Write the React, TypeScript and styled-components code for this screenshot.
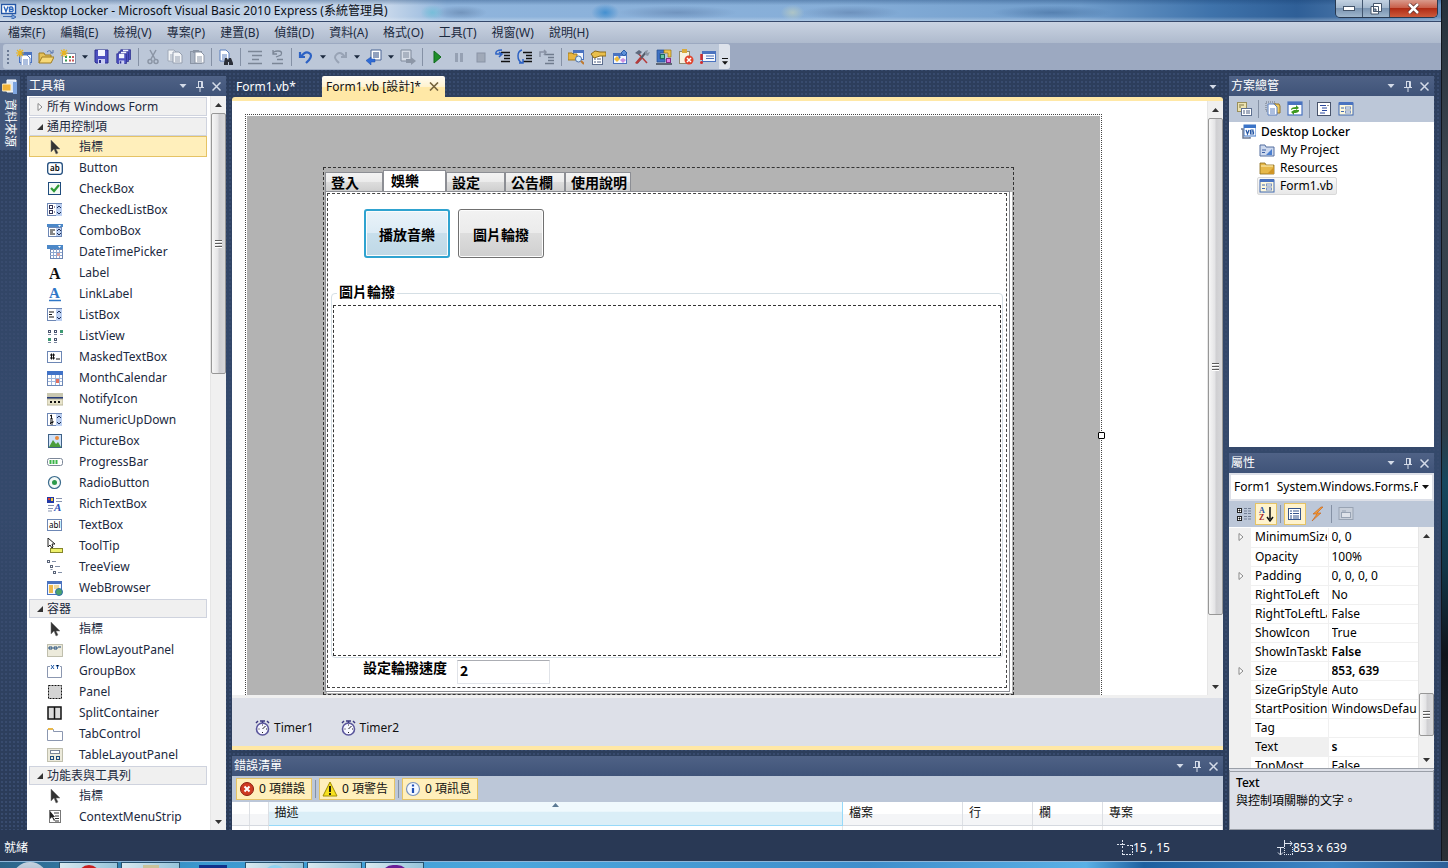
import React from 'react';
import styled, { createGlobalStyle, css } from 'styled-components';

const ui = `"Noto Sans", "Noto Sans CJK TC", sans-serif`;

const GlobalStyle = createGlobalStyle`
  *, *::before, *::after { box-sizing: border-box; }
  body { margin: 0; font: 12px/16px ${ui}; color: #1b293e; background: #2a3038; overflow: hidden; }
  button, input, select { font: inherit; color: inherit; margin: 0; padding: 0; border: 0; background: none; }
  ul { list-style: none; margin: 0; padding: 0; }
  a { color: inherit; text-decoration: none; }
  svg { display: block; flex: none; }
`;

/* ---------- icons ---------- */

const N = '#1f4b7c';
const B = '#6d87b5';

const Win = ({ x = 1, y = 2, w = 14, h = 12 }: { x?: number; y?: number; w?: number; h?: number }) => (
  <>
    <rect x={x} y={y} width={w} height={h} fill="#4a73c0" />
    <rect x={x + 1} y={y + 3} width={w - 2} height={h - 4} fill="#f4f7fd" />
  </>
);
const Spinner = () => (
  <>
    <rect x="9" y="2" width="6" height="12" fill="#bcd0f2" />
    <path d="M10 6l2-2 2 2M10 10l2 2 2-2" fill="none" stroke="#1d2f57" />
  </>
);
const ListFrame = () => <rect x=".5" y="1.5" width="14" height="12" fill="#fff" stroke={B} />;
const Page = ({ x = 4, y = 2, c = '#5b7fbe' }: { x?: number; y?: number; c?: string }) => (
  <>
    <path d={`M${x} ${y}h6l3 3v8h-9z`} fill="#fff" stroke={c} />
    <path d={`M${x + 2} ${y + 5}h5M${x + 2} ${y + 7}h5M${x + 2} ${y + 9}h5`} stroke={c} />
  </>
);
const Star = () => <path d="M4 0v8M0 4h8M1 1l6 6M7 1L1 7" stroke="#e9b520" strokeWidth="1.2" />;
const Disk = ({ x = 1, y = 1 }: { x?: number; y?: number }) => (
  <>
    <path d={`M${x} ${y}h13v13h-12l-1-1z`} fill="#4c4fc0" stroke="#2c2f8e" />
    <rect x={x + 3} y={y} width="7" height="6" fill="#f2f4ff" />
    <rect x={x + 3} y={y + 9} width="7" height="5" fill="#c9cdf0" />
    <rect x={x + 4} y={y + 10} width="2" height="3" fill="#2c2f8e" />
  </>
);
const Lines = ({ c = '#111' }: { c?: string }) => (
  <path d="M6 3.5h9M9 6.5h6M9 9.5h6M6 12.5h9" stroke={c} strokeWidth="1.6" />
);
const Folder = ({ c = '#e6b84a' }: { c?: string }) => (
  <>
    <path d="M1 3h5l1 2h8v9H1z" fill={c} stroke="#8a6a1a" strokeWidth=".8" />
    <path d="M2 6h12" stroke="#fff3c0" />
    <path d="M8 14l7-7v7z" fill="#cf9526" />
  </>
);

const icons: Record<string, React.ReactNode> = {
  vb: (<>
    <rect x=".5" y="1.5" width="14" height="9" fill="#fff" stroke="#2456a5" strokeWidth="1.4" />
    <path d="M3 3.500l2 5 2-5M8.500 4v4.500h3q1.500-1.200 0-2.200h-3M8.500 4h2.500q1.500 1 .5 2.300" fill="none" stroke="#2b66bd" strokeWidth="1.400" />
    <path d="M2 13.500h9v-2l4 2.500-4 2.500v-2" fill="#7ea5dc" stroke="#2456a5" strokeWidth=".8" />
  </>),
  newProject: (<><Win x={3} y={3} w={13} h={11} /><Page x={5} y={6} /><Star /></>),
  open: (<><path d="M1 14V4h5l1 2h6v3" fill="#e5c158" stroke="#a07d22" /><path d="M1 14l3-6h12l-3 6z" fill="#f7d978" stroke="#a07d22" /><path d="M9 3q3-3 5 1M15 1v3h-3" fill="none" stroke="#5675ad" /></>),
  addItem: (<><rect x="2.500" y="4.500" width="13" height="10" fill="#fff" stroke="#7f8ea8" /><path d="M5 8h2M9 8h2M5 11.500h2" stroke="#3a9a54" strokeWidth="2" /><path d="M12 8h2M9 11.500h2M12 11.500h2" stroke="#c95757" strokeWidth="2" /><Star /></>),
  save: <Disk />,
  saveAll: (<><g transform="translate(4 0) scale(.75)"><Disk /></g><g transform="translate(2 2) scale(.75)"><Disk /></g><g transform="translate(0 4) scale(.75)"><Disk /></g></>),
  cut: (<><path d="M5 1l5 9M11 1L6 10" stroke="#8b95a5" strokeWidth="1.500" /><circle cx="5" cy="12.500" r="2" fill="none" stroke="#8b95a5" strokeWidth="1.500" /><circle cx="11" cy="12.500" r="2" fill="none" stroke="#8b95a5" strokeWidth="1.500" /></>),
  copy: (<><g opacity=".8"><Page x={1} y={1} c="#98a2b2" /><Page x={6} y={3} c="#8b95a5" /></g></>),
  paste: (<><rect x="1.500" y="2.500" width="11" height="12" fill="#aab4c3" stroke="#8b95a5" /><rect x="4" y="1" width="6" height="3" fill="#8b95a5" /><g transform="translate(2 0)"><Page x={4} y={3} c="#8b95a5" /></g></>),
  find: (<><Page x={2} y={1} /><path d="M6 14l1-5h2l1 2 1-2h2l2 5v2h-4v-3h-1v3H6z" fill="#2b2f38" /></>),
  comment: <path d="M1 2.500h14M5 6.500h10M5 10.500h7M1 14.500h14" stroke="#7b8696" strokeWidth="1.300" />,
  uncomment: (<><path d="M4 5q0-3 5-3t3 4l-5 2M4 1v4h4" fill="none" stroke="#7b8696" strokeWidth="1.300" /><path d="M8 10.500h6M3 14.500h11" stroke="#7b8696" strokeWidth="1.300" /></>),
  undo: <path d="M2 3v5h5M3 8q4-6 8-4t0 7l-3 3" fill="none" stroke="#2d62c4" strokeWidth="2.200" />,
  redo: <path d="M14 3v5H9M13 8q-4-6-8-3t0 7l2 2" fill="none" stroke="#98a3b5" strokeWidth="2" />,
  navBack: (<><path d="M5 1h10v10H5z" fill="#fff" stroke="#4b6494" /><path d="M7 4h6M7 6h6M7 8h6" stroke="#23427c" /><path d="M9 10v3H5v3L0 11.500 5 8v2z" fill="#2f6bd6" stroke="#1f4ea8" strokeWidth=".5" /></>),
  navNext: (<><path d="M1 1h10v11H1z" fill="#d6dce6" stroke="#7f8a9c" /><path d="M3 4h6M3 6h6M3 8h6" stroke="#7f8a9c" /><path d="M6 10h5V8l5 4-5 4v-2H6z" fill="#8d97a7" /></>),
  play: <path d="M5 2l7 6-7 6z" fill="#1f8f2a" stroke="#0f6a1b" />,
  pause: <path d="M5.500 4v9M10.500 4v9" stroke="#96a1b3" strokeWidth="3" />,
  stop: <rect x="4" y="4" width="8" height="9" fill="#a0a9b8" stroke="#8994a6" />,
  stepInto: (<><Lines /><path d="M7 1Q0 1 1 5h5M4 3l3 2-3 3" fill="none" stroke="#2d62c4" strokeWidth="1.500" /></>),
  stepOver: (<><Lines /><path d="M5 1Q1 2 1 7t4 7M2 14h4v-4" fill="none" stroke="#2d62c4" strokeWidth="1.500" /></>),
  stepOut: (<><g transform="translate(0 2)"><Lines c="#6f7b8d" /></g><path d="M1 8V3h6M5 1l2 2-2 3" fill="none" stroke="#8993a5" strokeWidth="1.500" /></>),
  solution: (<><Win x={5} y={1} w={11} h={10} /><path d="M0 4h4l1 1h4v6H0z" fill="#e8b641" stroke="#a57c1c" /><circle cx="10.500" cy="10" r="3" fill="#d8efff" stroke="#4c6fa8" /><path d="M13 12l3 3" stroke="#c07a30" strokeWidth="2" /></>),
  properties: (<><rect x="2.500" y="6.500" width="10" height="9" fill="#fff" stroke="#5d6f8f" /><path d="M4 10h2M7 10h4M4 13h2M7 13h4" stroke="#4a5d80" /><path d="M1 5l4-3 5 1h6v4h-6l-6 2z" fill="#e9bf4c" stroke="#8b6a1c" /></>),
  toolboxWin: (<><Win x={1} y={4} w={14} h={11} /><path d="M2 10l3-3 3 3-3 3z" fill="#eebb3a" /><path d="M6 6l3 2-2 2z" fill="#3a6fd0" /><path d="M8 11l3-2 3 2-3 3z" fill="#c88fe0" /><path d="M12 1l3 3-3 3-3-3z" fill="#5c8fd8" stroke="#2c5fa8" /></>),
  tools: (<><path d="M3 3l10 11" stroke="#b53a3a" strokeWidth="1.500" /><path d="M12 3L3 14" stroke="#555e6c" strokeWidth="2" /><path d="M8 10l-2-2-5 6 2 1z" fill="#b53a3a" /><path d="M1 4l4-3 3 2-3 3z" fill="#5e6a7e" /><path d="M11 2l3-1-1 3 3-1-2 4-3-1z" fill="#8a94a4" /></>),
  extension: (<><path d="M1 1h7v3H4v6h5v3H1z" fill="#3e72c4" stroke="#244a8c" strokeWidth=".7" /><rect x="4.500" y="5.500" width="4" height="4" fill="#68c5a5" stroke="#1d6a5d" /><path d="M8 1h7v7h-3V4H8z" fill="#f0c44d" stroke="#997512" strokeWidth=".7" /><rect x="10.500" y="9.500" width="4" height="4" fill="#e67fe6" stroke="#852c85" /><rect x="0" y="14" width="16" height="2" fill="#5e6775" /></>),
  clipError: (<><rect x="1.500" y="2.500" width="10" height="12" fill="#f6f2e2" stroke="#8e8a70" /><rect x="4" y="0" width="5" height="4" fill="#d9aa3c" /><circle cx="11" cy="11" r="4.500" fill="#e0452f" /><path d="M9 9l4 4M13 9l-4 4" stroke="#fff" strokeWidth="1.500" /></>),
  errorList: (<><Win x={2} y={2} w={14} h={11} /><path d="M6 7h8M6 9.500h8" stroke="#4a6fb5" /><path d="M1.500 5v6" stroke="#d22b2b" strokeWidth="2.500" /><circle cx="1.500" cy="13.500" r="1.500" fill="#d22b2b" /></>),
  dataSource: (<><path d="M5 1h9v12H5z" fill="#dbe7f8" stroke="#fff" /><path d="M11 3h4v12h-4z" fill="#7ea5e0" /><rect x="0" y="5" width="9" height="7" rx="1" fill="#f2b43a" stroke="#fff3cf" /></>),
  pointer: <path d="M4 1v12l3-3 2 5 2-1-2-4h4z" fill="#333" stroke="#777" strokeWidth=".5" />,
  button: (<><rect x=".7" y="2.700" width="14.600" height="11.600" rx="2.500" fill="#fff" stroke={N} strokeWidth="1.300" /><text x="3" y="11" fontSize="8" fontFamily="Noto Sans" fontWeight="600" fill="#000">ab</text></>),
  checkbox: (<><rect x="1.500" y="1.500" width="12" height="12" fill="#f4faf7" stroke={N} /><path d="M4 7l3 3 5-6" fill="none" stroke="#2c9a35" strokeWidth="2.200" /></>),
  checkedList: (<><ListFrame /><rect x="2.500" y="3.500" width="3" height="3" fill="#fff" stroke="#335" /><rect x="2.500" y="8.500" width="3" height="3" fill="#fff" stroke="#335" /><path d="M7 5h1M7 10h1" stroke="#335" /><Spinner /></>),
  combo: (<><rect x="0" y="1" width="16" height="3" fill="#4c88c8" /><path d="M11 2h3l-1.500 2z" fill="#fff" /><rect x="1.500" y="4.500" width="13" height="9" fill="#fff" stroke={B} /><path d="M3 7h5M3 9h3M3 11h5" stroke="#111" /><rect x="9" y="5" width="5" height="8" fill="#bcd0f2" /><path d="M10 8l2-2 2 2M10 10l2 2 2-2" fill="none" stroke="#1d2f57" /></>),
  date: (<><rect x="0" y="1" width="16" height="4" fill="#4c88c8" /><path d="M11 2h3l-1.500 2z" fill="#fff" /><rect x="3.500" y="5.500" width="12" height="9" fill="#fff" stroke={B} /><path d="M3 8.500h12M3 11.500h12M6.500 5v9M9.500 5v9M12.500 5v9" stroke="#8fa8d0" /><rect x="10" y="9" width="3" height="3" fill="#d9a3a3" /></>),
  label: <text x="2" y="14" fontSize="16" fontFamily="Liberation Serif" fontWeight="700" fill="#111">A</text>,
  link: (<><text x="2" y="12" fontSize="15" fontFamily="Liberation Serif" fontWeight="700" fill="#2f78c8">A</text><path d="M2 14.500h12" stroke="#2f78c8" strokeWidth="1.500" /></>),
  list: (<><ListFrame /><path d="M2 5h5M2 7.500h3M2 10h5" stroke="#111" /><Spinner /></>),
  listView: (<><g fill="#fff" stroke="#4a5570"><rect x="1.500" y="2.500" width="2" height="2" /><rect x="7.500" y="2.500" width="2" height="2" /><rect x="7.500" y="10.500" width="2" height="2" /></g><rect x="13" y="2" width="3" height="3" fill="#3d9a72" /><rect x="1" y="10" width="3" height="3" fill="#3d9a72" /><path d="M1 6.500h3M7 6.500h3M13 6.500h3M1 14.500h3M7 14.500h3" stroke="#7b87a0" /></>),
  masked: (<><rect x=".5" y="2.500" width="14" height="11" fill="#fff" stroke={B} /><path d="M3 6h5M3 9h5M4.500 4.500v6M6.500 4.500v6M9 10h4" stroke="#111" /></>),
  month: (<><rect x=".5" y="1.500" width="15" height="14" fill="#fff" stroke={B} /><rect x="0" y="1" width="16" height="4" fill="#4173c8" /><path d="M1 8.500h14M1 11.500h14M4.500 5v10M8.500 5v10M12.500 5v10" stroke="#9fb6dc" /><rect x="9" y="9" width="3" height="4" fill="#e2705f" /></>),
  notify: (<><rect x="0" y="2" width="16" height="4" fill="#c9c7b0" /><rect x="0" y="6" width="16" height="2" fill="#263a78" /><rect x="0" y="8" width="16" height="6" fill="#e8e4cc" stroke="#b8b498" /><path d="M3 11h2M7 11h2M11 11h2" stroke="#111" strokeWidth="2" /></>),
  numeric: (<><ListFrame /><path d="M4.500 3v4M3 4l1.500-1M3 7h3M3 9h3v1.500H3.500V12H6" fill="none" stroke="#111" /><Spinner /></>),
  picture: (<><rect x="1.500" y="1.500" width="13" height="13" fill="#cfe2fa" stroke="#3f6186" /><path d="M2 14l4-7 3 4 2-2 3 5z" fill="#4b9d3d" /><circle cx="10" cy="5" r="2" fill="#e98a3c" /></>),
  progress: (<><rect x=".5" y="4.500" width="15" height="7" rx="2" fill="#fff" stroke="#7c8798" /><path d="M3.500 6v4M6.500 6v4M9.500 6v4" stroke="#3cb54a" strokeWidth="2" /></>),
  radio: (<><circle cx="7.500" cy="7.500" r="6" fill="#f4faf7" stroke="#3a6a8c" strokeWidth="1.200" /><circle cx="7.500" cy="7.500" r="2.500" fill="#2c9a4a" /></>),
  rich: (<><rect x="0" y="1" width="7" height="6" fill="#2339a5" /><path d="M1 2h2v2H1z" fill="#e3402f" /><path d="M4 2h2v3H4z" fill="#f6cb3a" /><path d="M9 2.500h6M9 5.500h6M1 9.500h6M1 12.500h5M1 15h4" stroke="#8693b0" /><text x="7" y="15" fontSize="11" fontStyle="italic" fontFamily="Liberation Serif" fontWeight="700" fill="#2b4fb5">A</text></>),
  text: (<><rect x=".5" y="2.500" width="14" height="11" fill="#fff" stroke={B} /><text x="2" y="11" fontSize="8" fontFamily="Noto Sans" fontWeight="400" fill="#000">abl</text></>),
  tooltip: (<><path d="M1 0v9l2-2 2 3 1-1-1-3h3z" fill="#fff" stroke="#222" /><rect x="3.500" y="10.500" width="12" height="4" fill="#eef06a" stroke="#85862a" /></>),
  tree: (<><g fill="#fff" stroke="#5a6478"><rect x="0.500" y="1.500" width="2" height="2" /><rect x="3.500" y="6.500" width="2" height="2" /><rect x="6.500" y="12.500" width="2" height="2" /></g><path d="M5 2.500h4M8 7.500h5M11 13.500h4M3.500 10.500h2" stroke="#8390a8" /></>),
  web: (<><Win x={0} y={1} w={15} h={14} /><rect x="2" y="5" width="4" height="8" fill="#efb94a" /><rect x="7" y="5" width="5" height="4" fill="#f0d99a" /><circle cx="12" cy="12" r="3.500" fill="#4ba36b" stroke="#2f6fae" /></>),
  flow: (<><rect x=".5" y="2.500" width="15" height="12" fill="#eceadb" stroke="#8b8a6c" strokeDasharray="1 1" /><path d="M2 5h3v2H2zM7 5h3v2H7zM11 5h3" fill="none" stroke={N} /></>),
  group: (<><path d="M3 3.500H.500v11h14v-11H13" fill="none" stroke="#8b97b0" /><path d="M4 2l3 4M7 2L4 6M9 2l1.500 2L12 2M10.500 4v2" stroke="#1f5aa8" /></>),
  panel: (<><rect x="1.500" y="1.500" width="13" height="13" fill="#d4d4d4" stroke="#111" strokeDasharray="2 1" /></>),
  split: (<><rect x="1" y="2" width="13" height="12" fill="#dcdcdc" stroke="#111" strokeWidth="1.500" /><path d="M7.500 2v12" stroke="#111" strokeWidth="1.500" /></>),
  tabs: (<><path d="M.500 3.500h6v2h9v9H.500z" fill="#fff" stroke="#8b97b0" /><path d="M1 3h5" stroke="#e9b84a" strokeWidth="2" /></>),
  tableLayout: (<><rect x=".5" y="1.500" width="15" height="13" fill="#eceadb" stroke="#8b8a6c" strokeDasharray="1 1" /><rect x="3.500" y="3.500" width="9" height="3" fill="#fff" stroke="#7b8696" /><rect x="3.500" y="9.500" width="3" height="3" fill="none" stroke={N} /><rect x="9.500" y="9.500" width="3" height="3" fill="none" stroke={N} /></>),
  context: (<><rect x="2.500" y="1.500" width="11" height="12" fill="#fff" stroke="#777" /><path d="M7 4h5M8 7h4M8 9.500h4M8 12h4" stroke="#333" /><path d="M3 2v8l2-2 2 4 1-1-2-3h2z" fill="#222" /></>),
  propPages: (<><rect x="1.500" y="1.500" width="9" height="9" fill="#ede3b0" stroke="#9a8f5a" /><path d="M3 4h5M3 6h2" stroke="#7d7445" /><rect x="5.500" y="7.500" width="10" height="7" fill="#fff" stroke="#5d6f8f" /><path d="M7 10h2M10 10h4M7 12h2M10 12h4" stroke="#4a5d80" /></>),
  showAll: (<><rect x="1" y="1" width="9" height="9" fill="none" stroke="#6b7280" strokeDasharray="1 1" /><path d="M8 3h6l1 2v7H8z" fill="#eec95e" stroke="#94752a" /><Page x={3} y={3} /></>),
  refresh: (<><rect x="1" y="1" width="14" height="13" fill="#fff" stroke="#4a73c0" strokeWidth="1.200" /><rect x="1" y="1" width="14" height="3" fill="#4a73c0" /><path d="M4 9V8q1-2 5-2V4l3 3-3 2V8H6M12 9v1q-1 2-5 2v2l-3-3 3-2" fill="#3f9a22" /></>),
  code: (<><rect x="1.500" y="1.500" width="13" height="13" fill="#fff" stroke="#47536b" /><path d="M4 4.500h6M6 7h5M6 9.500h5M4 12h5" stroke="#2b49a0" /><path d="M11 4.500h2" stroke="#999" /></>),
  designer: (<><rect x="1" y="2" width="14" height="12" fill="#fdf7dc" stroke="#3f68b0" /><rect x="1" y="1" width="14" height="3" fill="#4a73c0" /><path d="M3 7h3M3 10.500h3" stroke="#3f68b0" /><rect x="7.500" y="6" width="5" height="2" fill="#fff" stroke="#7b93c2" /><rect x="7.500" y="10" width="5" height="2" fill="#fff" stroke="#7b93c2" /></>),
  project: (<><rect x="4" y="1" width="12" height="11" fill="#fff" stroke="#3b74c8" /><rect x="4" y="1" width="12" height="3" fill="#3b74c8" /><path d="M6 6l1.500 4L9 6M10.500 6v4h3V8h-3M10.500 6h2.500v2" fill="none" stroke="#2456a5" strokeWidth="1.200" /><path d="M1 5h2v9h7v-1M3 5v7" fill="none" stroke="#6b7a94" strokeWidth="1.500" /></>),
  myProject: (<><path d="M1 3h5l1 2h8v9H1z" fill="#cdd9ee" stroke="#556f9f" /><path d="M3 8h4M3 10.500h3" stroke="#3b5fa5" /><path d="M7 13l6-6v6z" fill="#4a7fd0" /></>),
  folder: <Folder />,
  categorized: (<><rect x="1.500" y="2.500" width="4" height="4" fill="#fff" stroke="#222" /><rect x="1.500" y="10.500" width="4" height="4" fill="#fff" stroke="#222" /><path d="M2.500 4.500h2M3.500 3.500v2M2.500 12.500h2M3.500 11.500v2" stroke="#111" /><path d="M8 2.500h3M12 2.500h3M8 5h3M12 5h3M8 7.500h3M12 7.500h3M8 10.500h3M12 10.500h3M8 13h3M12 13h3" stroke="#727f95" /></>),
  sortAz: (<><text x="1" y="7" fontSize="8" fontWeight="700" fontFamily="Liberation Serif" fill="#2a4fa8">A</text><text x="1" y="14" fontSize="8" fontWeight="700" fontFamily="Liberation Serif" fill="#a52a2a">Z</text><path d="M12 1v12M9 11l3 4 3-4" fill="none" stroke="#111" strokeWidth="1.500" /></>),
  propList: (<><rect x="1.500" y="2.500" width="12" height="11" fill="#fff" stroke="#35548c" /><path d="M3 5h2M6 5h6M3 7.500h2M6 7.500h6M3 10h2M6 10h6M3 12h2M6 12h6" stroke="#35548c" /></>),
  bolt: <path d="M12 1L4 8h4l-5 7 9-8H8l6-6z" fill="#f29b38" stroke="#c4601a" strokeWidth=".6" />,
  propDisabled: (<><rect x="1" y="1.500" width="14" height="12" fill="#c8cfda" stroke="#98a3b3" /><rect x="3.500" y="6.500" width="9" height="5" fill="#dfe3ea" stroke="#98a3b3" /><path d="M4 5h4" stroke="#98a3b3" /></>),
  timer: (<><circle cx="7.500" cy="9" r="6" fill="#f7f7ff" stroke="#5a569c" strokeWidth="1.600" /><path d="M7.500 9l3-3M7.500 4.500v1M3.500 9h1M7.500 13v-1M11 9h1" stroke="#222" /><path d="M5 1h5M7.500 1v2M1 3l2-2M12 1l2 2" stroke="#3c3880" strokeWidth="1.500" /></>),
  error: (<><circle cx="8" cy="8" r="6.500" fill="#cf3a22" stroke="#8a1f10" /><path d="M5.500 5.500l5 5M10.500 5.500l-5 5" stroke="#fff" strokeWidth="2" /></>),
  warning: (<><path d="M8 1l7 14H1z" fill="#f7e11e" stroke="#a08c00" /><path d="M8 5v6M8 12v2" stroke="#111" strokeWidth="1.800" /></>),
  info: (<><circle cx="8" cy="8" r="6.500" fill="#f5f9ff" stroke="#7b94bd" strokeWidth="1.200" /><path d="M8 3.500v2M8 7v5" stroke="#1f4fb5" strokeWidth="2.200" /></>),
  location: (<path d="M0 4.500h9M5.500 0v9M6 14.500h10M15.500 5v10M10 5.500h5M5.500 10v5" fill="none" stroke="#dfe5f0" strokeDasharray="2 1" />),
  size: (<><path d="M8 3.500h7M7.500 0v7M13 1l2 2.500L13 6M3.500 7v8M1 12.500L3.500 15 6 12.500M0 7.500h7" fill="none" stroke="#dfe5f0" /><path d="M7 14.500h9M15.500 7v8M7.500 8v6" fill="none" stroke="#dfe5f0" strokeDasharray="1 1" /></>),
};

const Icon = ({ name, size = 16 }: { name: string; size?: number }) => (
  <svg width={size} height={size} viewBox="0 0 16 16" aria-hidden="true">{icons[name]}</svg>
);
const Down = ({ c = '#1b293e', w = 7 }: { c?: string; w?: number }) => (
  <svg width={w} height="4" viewBox="0 0 7 4" aria-hidden="true"><path d="M0 0h7L3.500 4z" fill={c} /></svg>
);

/* ---------- shell ---------- */

const Screen = styled.div`display: flex; flex-direction: column; height: 100vh; min-height: 480px;`;
const Desktop = styled.div`flex: 1; min-height: 0; display: flex;`;
const Wallpaper = styled.div`
  width: 7px; border-left: 1px solid #11161e;
  background: linear-gradient(#26313c 0, #3c4650 20%, #2e3c48 50%, #16485f 56%, #123648 66%, #10151c 76%, #2b3036 100%);
`;
const AppWindow = styled.main`
  flex: 1; min-width: 0; display: flex; flex-direction: column;
  background-color: #2c3d5b;
  background-image: radial-gradient(#384b6e 1px, transparent 1px), linear-gradient(#2b3b58, #34496b 45%, #34496b 60%, #293955);
  background-size: 4px 4px, 100% 100%;
`;
const TitleBar = styled.header`
  display: flex; align-items: center; gap: 4px; height: 22px; padding-left: 1px;
  border-bottom: 1px solid #35486b;
  background: linear-gradient(rgba(20, 60, 110, .35), transparent 25%, transparent 80%, rgba(255,255,255,.3)),
    radial-gradient(ellipse 12px 8px at 30% 60%, rgba(110, 190, 215, .8), transparent),
    radial-gradient(ellipse 26px 7px at 32% 60%, rgba(80, 110, 150, .45), transparent),
    radial-gradient(ellipse 14px 9px at 42% 60%, rgba(50, 135, 205, .8), transparent),
    radial-gradient(ellipse 60px 7px at 47% 60%, rgba(75, 105, 150, .4), transparent),
    radial-gradient(ellipse 12px 8px at 55% 60%, rgba(190, 205, 190, .7), transparent),
    radial-gradient(ellipse 50px 7px at 59% 60%, rgba(75, 105, 150, .4), transparent),
    radial-gradient(ellipse 60px 7px at 73% 60%, rgba(45, 85, 135, .4), transparent),
    linear-gradient(90deg, #b9cbe2 0, #c5d6ea 27%, #8fb4dc 31%, #86aed8 58%, #6f9ccb 75%, #3f73ab 84%, #2f5f97 90%, #6b93bf 100%);
`;
const Title = styled.h1`
  flex: 1; margin: 0; font: 12px/20px ${ui}; color: #0b0f16; white-space: nowrap;
`;
const WindowControls = styled.div`
  align-self: flex-start; display: flex; height: 18px; margin-right: 3px;
  border: 1px solid #27384f; border-top: 0; border-radius: 0 0 5px 5px; overflow: hidden;
`;
const WindowButton = styled.button<{ $danger?: boolean }>`
  display: grid; place-items: center; width: ${p => (p.$danger ? 47 : 27)}px;
  border-right: ${p => (p.$danger ? '0' : '1px solid #42566f')};
  background: ${p => (p.$danger
    ? 'linear-gradient(#d99a8c, #c9604b 45%, #b02c15 50%, #cc5a3c)'
    : 'linear-gradient(#c3d2e2, #a4b8cd 45%, #7b95b2 50%, #9fb6cc)')};
`;
const MenuBar = styled.nav`
  display: flex; align-items: center; height: 21px;
  background: linear-gradient(#cad3e2, #aebacd);
`;
const MenuItem = styled.button`padding: 0 7px 0 8px; line-height: 20px; white-space: nowrap;`;
const ToolStripArea = styled.div`height: 27px; padding: 1px 0 1px 3px; background: #9ca9c1; display: flex;`;
const ToolStrip = styled.div`
  display: flex; align-items: center; border-radius: 3px; background: #bcc7d8; overflow: hidden;
`;
const Grip = styled.span`width: 2px; height: 14px; margin: 0 4px; border-left: 2px dotted #6b7a94;`;
const ToolButton = styled.button<{ $on?: boolean }>`
  display: grid; place-items: center; flex: none; width: 22px; height: 22px;
  ${p => p.$on && css`background: #fff3cd; border: 1px solid #e5c365;`}
`;
const DropArrow = styled.button`display: grid; place-items: center; width: 12px; height: 22px;`;
const Separator = styled.span`flex: none; width: 1px; height: 18px; margin: 0 3px; background: #8591a5;`;
const Overflow = styled.button`
  align-self: stretch; width: 11px; display: flex; flex-direction: column; align-items: center; justify-content: flex-end;
  gap: 2px; padding-bottom: 4px; background: #dde2eb; color: #111;
  &::before { content: ''; width: 6px; height: 1px; background: #111; }
`;
const Workspace = styled.div`flex: 1; min-height: 0; display: flex; gap: 6px; padding: 6px 7px 0 0;`;
const Left = styled.div`flex: none; display: flex; width: 226px;`;
const Rail = styled.div`width: 27px;`;
const RailTab = styled.button`
  display: flex; align-items: center; gap: 4px; width: 20px; height: 74px; padding: 3px 0 0;
  writing-mode: vertical-rl; text-orientation: sideways; background: #3f5478; color: #fff; line-height: 20px;
`;
const Center = styled.div`flex: 1; min-width: 0; display: flex; flex-direction: column; gap: 6px;`;
const Right = styled.div`flex: none; display: flex; flex-direction: column; gap: 6px; width: 205px;`;
const StatusBar = styled.footer`
  display: flex; align-items: center; height: 31px; padding: 4px 94px 0 4px; background: #293955; color: #fff;
`;
const StatusText = styled.span<{ $grow?: boolean }>`
  flex: ${p => (p.$grow ? 1 : 'none')}; display: flex; align-items: center; min-width: ${p => (p.$grow ? 0 : 70)}px;
  & + & + & { margin-left: 90px; }
`;

/* ---------- tool windows ---------- */

const PanelBox = styled.section<{ $size?: string }>`
  flex: ${p => p.$size ?? '1'}; min-height: 0; min-width: 0; display: flex; flex-direction: column; background: #fff;
`;
const PanelHeader = styled.header`
  flex: none; display: flex; align-items: center; gap: 8px; height: 20px; padding: 0 5px 0 2px;
  background: linear-gradient(#4f6286, #3f5378);
`;
const PanelTitle = styled.h2`flex: 1; margin: 0; font: 12px/18px ${ui}; color: #fff;`;
const HeaderButton = styled.button`display: grid; place-items: center; width: 9px; height: 16px;`;
const PanelTools = styled.div<{ $pad?: number }>`
  flex: none; display: flex; align-items: center; height: 26px; padding: 0 ${p => p.$pad ?? 4}px; background: #bcc7d8;
`;

const Panel = ({ title, size, children }: { title: string; size?: string; children: React.ReactNode }) => (
  <PanelBox $size={size}>
    <PanelHeader>
      <PanelTitle>{title}</PanelTitle>
      <HeaderButton aria-label="Options"><Down c="#d4dbe8" w={8} /></HeaderButton>
      <HeaderButton aria-label="Pin">
        <svg width="8" height="11" viewBox="0 0 8 11"><path d="M2 .5h4.500V6M2.500 .5V6M5.500 1v5M0 6.500h8M4 7v4" fill="none" stroke="#d4dbe8" /></svg>
      </HeaderButton>
      <HeaderButton aria-label="Close">
        <svg width="9" height="9" viewBox="0 0 9 9"><path d="M.5 .5l8 8M8.500 .5l-8 8" stroke="#d4dbe8" strokeWidth="1.500" /></svg>
      </HeaderButton>
    </PanelHeader>
    {children}
  </PanelBox>
);

const ScrollColumn = styled.div`
  flex: none; display: flex; flex-direction: column; width: 16px; background: #f0f0f0; border-left: 1px solid #e6e6e6;
`;
const ScrollArrow = styled.button<{ $up?: boolean }>`
  display: grid; place-items: center; flex: none; height: 17px;
  svg { transform: ${p => (p.$up ? 'rotate(180deg)' : 'none')}; }
`;
const ScrollGap = styled.div<{ $part: number }>`flex: ${p => p.$part} 1 0;`;
const ScrollThumb = styled.div<{ $part: number }>`
  flex: ${p => p.$part} 1 0; display: grid; place-items: center; border: 1px solid #979797; border-radius: 2px;
  background: linear-gradient(90deg, #f6f6f6, #e4e4e6 45%, #cfcfd2 55%, #d8d8da);
  &::after { content: ''; width: 7px; height: 8px; background: repeating-linear-gradient(#5c5c5c 0 1px, #fff 1px 2px, transparent 2px 3px); }
`;
const Scrollbar = ({ parts: [a, b, c] }: { parts: [number, number, number] }) => (
  <ScrollColumn>
    <ScrollArrow $up aria-label="Scroll up"><Down c="#333" /></ScrollArrow>
    <ScrollGap $part={a} /><ScrollThumb $part={b} /><ScrollGap $part={c} />
    <ScrollArrow aria-label="Scroll down"><Down c="#333" /></ScrollArrow>
  </ScrollColumn>
);
const ScrollRow = styled.div`flex: 1; min-height: 0; display: flex;`;

const ToolList = styled.div`flex: 1; min-width: 0; overflow: hidden; padding: 0 3px 0 2px;`;
const Category = styled.button`
  display: flex; align-items: center; gap: 3px; width: 100%; height: 19px; margin-top: 1px; padding-left: 6px;
  border: 1px solid #cfd3de; background: #f0f0f0; white-space: nowrap;
  svg { width: 8px; height: 8px; }
`;
const ToolItem = styled.button<{ $on?: boolean }>`
  display: flex; align-items: center; gap: 16px; width: 100%; height: 21px; padding-left: 17px;
  border: 1px solid ${p => (p.$on ? '#e5c365' : 'transparent')}; background: ${p => (p.$on ? '#ffefbb' : 'none')};
  white-space: nowrap;
`;

const toolbox: { name: string; open: boolean; items: [string, string][] }[] = [
  { name: '所有 Windows Form', open: false, items: [] },
  {
    name: '通用控制項', open: true, items: [
      ['pointer', '指標'], ['button', 'Button'], ['checkbox', 'CheckBox'], ['checkedList', 'CheckedListBox'],
      ['combo', 'ComboBox'], ['date', 'DateTimePicker'], ['label', 'Label'], ['link', 'LinkLabel'], ['list', 'ListBox'],
      ['listView', 'ListView'], ['masked', 'MaskedTextBox'], ['month', 'MonthCalendar'], ['notify', 'NotifyIcon'],
      ['numeric', 'NumericUpDown'], ['picture', 'PictureBox'], ['progress', 'ProgressBar'], ['radio', 'RadioButton'],
      ['rich', 'RichTextBox'], ['text', 'TextBox'], ['tooltip', 'ToolTip'], ['tree', 'TreeView'], ['web', 'WebBrowser'],
    ],
  },
  {
    name: '容器', open: true, items: [
      ['pointer', '指標'], ['flow', 'FlowLayoutPanel'], ['group', 'GroupBox'], ['panel', 'Panel'],
      ['split', 'SplitContainer'], ['tabs', 'TabControl'], ['tableLayout', 'TableLayoutPanel'],
    ],
  },
  { name: '功能表與工具列', open: true, items: [['pointer', '指標'], ['context', 'ContextMenuStrip']] },
];

/* ---------- designer ---------- */

const EditorGroup = styled.section`flex: 1; min-height: 0; display: flex; flex-direction: column;`;
const EditorTabs = styled.div`flex: none; display: flex; align-items: center; height: 21px; padding-right: 6px;`;
const EditorTab = styled.button<{ $on?: boolean }>`
  display: flex; align-items: center; justify-content: space-between; height: 21px; padding: 0 6px 0 4px; white-space: nowrap;
  width: ${p => (p.$on ? 123 : 90)}px; color: ${p => (p.$on ? '#111' : '#fff')};
  background: ${p => (p.$on ? 'linear-gradient(#fffcf3, #fff3d0 50%, #ffe8a6 55%)' : 'none')};
  border-radius: 2px 2px 0 0;
`;
const Spacer = styled.span`flex: 1;`;
const EditorFrame = styled.div`
  flex: 1; min-height: 0; display: flex; flex-direction: column; border-top: 4px solid #ffe8a6; border-bottom: 4px solid #ffe8a6;
  border-radius: 3px 3px 0 0; background: #fff;
`;
const Canvas = styled.div`flex: 1; min-width: 0; overflow: hidden; padding: 13px 0 0 13px; background: #fff;`;
const FormSurface = styled.div`
  position: relative; width: 857px; height: 643px; padding: 52px 0 0 77px; border: 1px dotted #444;
  background: #b3b3b3; background-clip: padding-box; box-shadow: inset 0 0 0 1px #fff;
`;
const SizeHandle = styled.span`
  position: absolute; right: -4px; top: calc(50% - 4px); width: 7px; height: 7px; background: #fff; border: 1px solid #000; border-radius: 1px;
`;
const designer = `"Noto Sans CJK TC", "Noto Sans", sans-serif`;
const TabControl = styled.div`
  width: 691px; height: 528px; padding: 2px 3px 2px 1px; border: 1px dashed #333; color: #000;
  display: flex; flex-direction: column; font: 700 14px/18px ${designer};
`;
const PageTabs = styled.div`flex: none; display: flex; align-items: flex-end; height: 21px;`;
const PageTab = styled.button<{ $on?: boolean; $w: number }>`
  width: ${p => p.$w}px; height: ${p => (p.$on ? 22 : 19)}px; margin-bottom: ${p => (p.$on ? -1 : 0)}px;
  padding: 0 0 ${p => (p.$on ? 4 : 0)}px ${p => (p.$on ? 7 : 5)}px; text-align: left; white-space: nowrap;
  border: 1px solid #8c8e94; border-bottom: 0; line-height: 18px;
  background: ${p => (p.$on ? '#fff' : 'linear-gradient(#f3f3f3, #ebebeb 50%, #dddddd 52%, #cfcfcf)')};
`;
const TabPage = styled.div`
  flex: 1; min-height: 0; padding: 1px 1px 3px; background: #fff; border: 1px solid #8c8e94;
  box-shadow: 2px 1px 0 #fff;
`;
const PageOutline = styled.div`
  display: flex; flex-direction: column; height: 100%; margin-right: 1px; padding: 15px 3px 2px; border: 1px dashed #444;
`;
const ButtonRow = styled.div`flex: none; display: flex; gap: 8px; padding-left: 33px;`;
const FormButton = styled.button<{ $focus?: boolean }>`
  width: 86px; height: 49px; border-radius: 3px; font-weight: 700;
  border: ${p => (p.$focus ? '2px solid #2fa3d0' : '1px solid #707070')};
  box-shadow: inset 0 0 0 1px #fcfcfc;
  background: ${p => (p.$focus
    ? 'linear-gradient(#eaf3f9, #dcebf5 48%, #c8dfec 50%, #bfd8e6)'
    : 'linear-gradient(#f2f2f2, #ebebeb 48%, #dddddd 50%, #cfcfcf)')};
`;
const GroupBox = styled.fieldset`
  flex: 1; min-width: 0; min-height: 0; display: flex; flex-direction: column; margin: 24px 0 0; padding: 1px 1px 1px;
  border: 1px solid #d5dfe5; border-radius: 4px;
`;
const Legend = styled.legend`margin-left: 4px; padding: 0 2px 4px;`;
const DashedPanel = styled.div`flex: 1; border: 1px dashed #333;`;
const SpeedRow = styled.div`flex: none; display: flex; gap: 10px; height: 27px; padding-left: 32px;`;
const SpeedInput = styled.input`
  width: 93px; height: 24px; margin-top: 2px; padding: 0 2px 4px; border: 1px solid #e0e3e8; border-top-color: #abadb3; background: #fff; font-weight: 700;
`;
const Tray = styled.div`
  flex: none; display: flex; gap: 27px; height: 51px; padding: 18px 23px 0; border-top: 3px solid #f0f0f0; background: #dde0e8; color: #111;
`;
const TrayItem = styled.button`display: flex; align-items: center; gap: 3px; height: 24px;`;

/* ---------- error list ---------- */

const FilterButton = styled.button`
  display: flex; align-items: center; gap: 4px; height: 22px; padding: 0 6px 0 2px; border: 1px solid #e5c365;
  background: #ffefbb; color: #111; white-space: nowrap;
`;
const ErrorTable = styled.table`
  width: 100%; table-layout: fixed; border-collapse: collapse; color: #111;
  th { height: 23px; padding: 0 6px; text-align: left; font-weight: 400; border-right: 1px solid #dcdfe4; border-bottom: 1px solid #d5d9e0; background: linear-gradient(#fff 50%, #f4f5f7 52%); }
  th[aria-sort] { background: linear-gradient(#f0f9fd 40%, #daeef7 45%); border-color: #96d9f9; border-left: 1px solid #96d9f9; }
  td { height: 5px; padding: 0; border-right: 1px solid #e6e6e6; }
`;
const SortMark = styled.div`
  float: left; width: 100%; height: 0; display: flex; justify-content: center;
  svg { transform: rotate(180deg); margin-top: -2px; }
`;

/* ---------- right side ---------- */

const Tree = styled.ul`&& { padding-top: 1px; } color: #000;`;
const TreeRow = styled.li<{ $root?: boolean }>`
  display: flex; padding-left: ${p => (p.$root ? 9 : 28)}px; height: 18px; font-weight: ${p => (p.$root ? 500 : 400)};
`;
const TreeLink = styled.a<{ $on?: boolean }>`
  display: flex; align-items: center; gap: 5px; height: 18px; padding: 0 3px 0 1px; line-height: 16px;
  border: 1px solid ${p => (p.$on ? '#d9d9d9' : 'transparent')}; border-radius: 2px;
  background: ${p => (p.$on ? 'linear-gradient(#fafafa, #e8e8e8)' : 'none')};
`;
const SelectWrap = styled.label`
  flex: none; display: flex; align-items: center; height: 28px; padding: 2px; background: #dde0e8; color: #000;
`;
const ObjectSelect = styled.select`
  flex: 1; min-width: 0; height: 24px; padding: 0 0 0 3px; appearance: none; background: #fff;
`;
const SelectArrow = styled.span`display: grid; place-items: center; width: 14px; height: 24px; background: #fff;`;
const GridWrap = styled.div`flex: 1; min-width: 0; overflow: hidden; padding-top: 1px; background: #fff;`;
const PropTable = styled.table`
  width: 100%; table-layout: fixed; border-collapse: collapse; color: #000;
  td, th { height: 19px; padding: 0 0 0 4px; text-align: left; font-weight: 400; border-bottom: 1px solid #f0f0f0; line-height: 16px; }
  th { border-right: 1px solid #f0f0f0; }
  td:first-child { background: #f0f0f0; padding: 0 0 0 8px; }
  td:last-child { padding-left: 3px; }
`;
const Clip = styled.span`display: block; margin-right: 1px; overflow: hidden; white-space: nowrap;`;
const NameCell = styled.th<{ $on?: boolean }>`background: ${p => (p.$on ? '#f0f0f0' : '#fff')};`;
const ValueCell = styled.td<{ $bold?: boolean }>`&& { font-weight: ${p => (p.$bold ? 600 : 400)}; }`;
const Description = styled.div`
  flex: none; height: 62px; padding: 2px 6px; border: 1px solid #9a9fa8; border-top: 4px double #9a9fa8; background: #dde0e8; color: #000;
  h3, p { margin: 0; line-height: 18px; }
  h3 { font-size: 12px; font-weight: 500; }
`;

const properties: [string, string, boolean?, boolean?][] = [
  ['MinimumSize', '0, 0', true], ['Opacity', '100%'], ['Padding', '0, 0, 0, 0', true], ['RightToLeft', 'No'],
  ['RightToLeftLayout', 'False'], ['ShowIcon', 'True'], ['ShowInTaskbar', 'False', false, true], ['Size', '853, 639', true, true],
  ['SizeGripStyle', 'Auto'], ['StartPosition', 'WindowsDefaultLocation'], ['Tag', ''], ['Text', 's', false, true], ['TopMost', 'False'],
];

/* ---------- taskbar ---------- */

const Taskbar = styled.div`
  flex: none; display: flex; gap: 3px; height: 7px; overflow: hidden; border-top: 1px solid #8fb6d8;
  background: linear-gradient(90deg, #2c6488 0, #3a98cf 14%, #4ba6dc 35%, #3f8ecb 60%, #5ab0e6 75%, #1d5f9f 79%, #3d86c6 92%, #2a5f98 100%);
`;
const StartOrb = styled.button`
  width: 36px; height: 36px; margin: 0 8px 0 12px; border-radius: 50%; background: linear-gradient(#c6d3e0, #6d8ba8);
`;
const TaskButton = styled.button<{ $w?: number; $flat?: boolean }>`
  display: flex; justify-content: center; width: ${p => p.$w ?? 59}px; height: 40px; padding-top: 2px;
  border: 1px solid ${p => (p.$flat ? 'transparent' : '#26506d')};
  background: ${p => (p.$flat ? 'none' : 'linear-gradient(100deg, #d9e9f0, #8fc0d8)')};
`;
const TaskGlyph = styled.span<{ $c: string; $w: number; $square?: boolean }>`
  width: ${p => p.$w}px; height: 24px; background: ${p => p.$c}; border-radius: ${p => (p.$square ? '0' : '12px')};
`;

const menus = ['檔案(F)', '編輯(E)', '檢視(V)', '專案(P)', '建置(B)', '偵錯(D)', '資料(A)', '格式(O)', '工具(T)', '視窗(W)', '說明(H)'];
const mainTools = 'newProject open addItem v save saveAll | cut copy paste | find | comment uncomment | undo v redo v navBack v navNext | play pause stop stepInto stepOver stepOut | solution properties toolboxWin tools extension clipError errorList'.split(' ');

const Tools = ({ names, active = [] }: { names: string[]; active?: string[] }) => (
  <>
    {names.map((n, i) => n === '|' ? <Separator key={i} />
      : n === 'v' ? <DropArrow key={i} aria-label="More"><Down w={6} /></DropArrow>
      : <ToolButton key={i} aria-label={n} $on={active.includes(n)}><Icon name={n} /></ToolButton>)}
  </>
);

export default function App() {
  return (
    <Screen>
      <GlobalStyle />
      <Desktop>
        <AppWindow>
          <TitleBar>
            <Icon name="vb" />
            <Title>Desktop Locker - Microsoft Visual Basic 2010 Express (系統管理員)</Title>
            <WindowControls>
              <WindowButton aria-label="Minimize"><svg width="12" height="5"><rect x=".5" y=".5" width="11" height="4" fill="#fff" stroke="#44556b" /></svg></WindowButton>
              <WindowButton aria-label="Restore"><svg width="12" height="12"><path d="M3.500 .5h8v8h-8zM1 3.500h7.500V11H1z" fill="#fff" stroke="#44556b" /><path d="M3.500 6h2.500v2.500H3.500z" fill="#8aa0b8" stroke="#44556b" /></svg></WindowButton>
              <WindowButton $danger aria-label="Close"><svg width="13" height="11"><path d="M2 1l9 9M11 1L2 10" stroke="#5a2a26" strokeWidth="4" /><path d="M2 1l9 9M11 1L2 10" stroke="#fff" strokeWidth="2.500" /></svg></WindowButton>
            </WindowControls>
          </TitleBar>
          <MenuBar>{menus.map(m => <MenuItem key={m}>{m}</MenuItem>)}</MenuBar>
          <ToolStripArea>
            <ToolStrip>
              <Grip />
              <Tools names={mainTools} />
              <Overflow aria-label="Toolbar options"><Down c="#111" w={6} /></Overflow>
            </ToolStrip>
          </ToolStripArea>

          <Workspace>
            <Left>
              <Rail><RailTab><Icon name="dataSource" />資料來源</RailTab></Rail>
              <Panel title="工具箱">
                <ScrollRow>
                  <ToolList>
                    {toolbox.map(group => (
                      <React.Fragment key={group.name}>
                        <Category aria-expanded={group.open}>
                          <svg viewBox="0 0 8 8">{group.open ? <path d="M7 1v6H1z" fill="#333" /> : <path d="M2 .5v7L6 4z" fill="#fff" stroke="#888" />}</svg>
                          {group.name}
                        </Category>
                        {group.items.map(([icon, label], i) => (
                          <ToolItem key={label} $on={i === 0 && group.name === '通用控制項'}><Icon name={icon} />{label}</ToolItem>
                        ))}
                      </React.Fragment>
                    ))}
                  </ToolList>
                  <Scrollbar parts={[0, 260, 440]} />
                </ScrollRow>
              </Panel>
            </Left>

            <Center>
              <EditorGroup>
                <EditorTabs>
                  <EditorTab>Form1.vb*</EditorTab>
                  <EditorTab $on>Form1.vb [設計]*
                    <svg width="10" height="9" viewBox="0 0 10 9"><path d="M1 .5l8 8M9 .5l-8 8" stroke="#75633d" strokeWidth="1.600" /></svg>
                  </EditorTab>
                  <Spacer />
                  <Down c="#d4dbe8" w={8} />
                </EditorTabs>
                <EditorFrame>
                  <ScrollRow>
                    <Canvas>
                      <FormSurface>
                        <TabControl>
                          <PageTabs role="tablist">
                            <PageTab role="tab" $w={58}>登入</PageTab>
                            <PageTab role="tab" $on $w={63}>娛樂</PageTab>
                            <PageTab role="tab" $w={59}>設定</PageTab>
                            <PageTab role="tab" $w={60}>公告欄</PageTab>
                            <PageTab role="tab" $w={66}>使用說明</PageTab>
                          </PageTabs>
                          <TabPage>
                            <PageOutline>
                              <ButtonRow>
                                <FormButton $focus>播放音樂</FormButton>
                                <FormButton>圖片輪撥</FormButton>
                              </ButtonRow>
                              <GroupBox>
                                <Legend>圖片輪撥</Legend>
                                <DashedPanel />
                              </GroupBox>
                              <SpeedRow>
                                <label htmlFor="speed">設定輪撥速度</label>
                                <SpeedInput id="speed" defaultValue="2" />
                              </SpeedRow>
                            </PageOutline>
                          </TabPage>
                        </TabControl>
                        <SizeHandle />
                      </FormSurface>
                    </Canvas>
                    <Scrollbar parts={[0, 497, 63]} />
                  </ScrollRow>
                  <Tray>
                    <TrayItem><Icon name="timer" />Timer1</TrayItem>
                    <TrayItem><Icon name="timer" />Timer2</TrayItem>
                  </Tray>
                </EditorFrame>
              </EditorGroup>

              <Panel title="錯誤清單" size="none">
                <PanelTools>
                  <FilterButton><Icon name="error" />0 項錯誤</FilterButton><Separator />
                  <FilterButton><Icon name="warning" />0 項警告</FilterButton><Separator />
                  <FilterButton><Icon name="info" />0 項訊息</FilterButton>
                </PanelTools>
                <ErrorTable>
                  <colgroup><col width="17" /><col width="19" /><col /><col width="120" /><col width="70" /><col width="70" /><col width="120" /></colgroup>
                  <thead>
                    <tr>
                      <th /><th />
                      <th aria-sort="ascending"><SortMark><Down c="#5b7a94" /></SortMark>描述</th>
                      <th>檔案</th><th>行</th><th>欄</th><th>專案</th>
                    </tr>
                  </thead>
                  <tbody><tr><td /><td /><td /><td /><td /><td /><td /></tr></tbody>
                </ErrorTable>
              </Panel>
            </Center>

            <Right>
              <Panel title="方案總管" size="371">
                <PanelTools><Tools names={['propPages', '|', 'showAll', 'refresh', '|', 'code', 'designer']} /></PanelTools>
                <Tree>
                  <TreeRow $root><TreeLink href="#"><Icon name="project" />Desktop Locker</TreeLink></TreeRow>
                  <TreeRow><TreeLink href="#"><Icon name="myProject" />My Project</TreeLink></TreeRow>
                  <TreeRow><TreeLink href="#"><Icon name="folder" />Resources</TreeLink></TreeRow>
                  <TreeRow><TreeLink href="#" $on><Icon name="designer" />Form1.vb</TreeLink></TreeRow>
                </Tree>
              </Panel>
              <Panel title="屬性" size="377">
                <SelectWrap>
                  <ObjectSelect aria-label="屬性"><option>{'Form1\u00a0 System.Windows.Forms.Form'}</option></ObjectSelect>
                  <SelectArrow><Down c="#111" /></SelectArrow>
                </SelectWrap>
                <PanelTools><Tools names={['categorized', 'sortAz', '|', 'propList', 'bolt', '|', 'propDisabled']} active={['sortAz', 'propList']} /></PanelTools>
                <ScrollRow>
                  <GridWrap>
                    <PropTable>
                      <colgroup><col width="22" /><col width="77" /><col /></colgroup>
                      <tbody>
                        {properties.map(([name, value, expandable, bold]) => (
                          <tr key={name}>
                            <td>{expandable && <svg width="8" height="8" viewBox="0 0 8 8"><path d="M2 .5v7L6 4z" fill="#fff" stroke="#888" /></svg>}</td>
                            <NameCell scope="row" $on={name === 'Text'}><Clip>{name}</Clip></NameCell>
                            <ValueCell $bold={bold}><Clip>{value}</Clip></ValueCell>
                          </tr>
                        ))}
                      </tbody>
                    </PropTable>
                  </GridWrap>
                  <Scrollbar parts={[149, 41, 15]} />
                </ScrollRow>
                <Description><h3>Text</h3><p>與控制項關聯的文字。</p></Description>
              </Panel>
            </Right>
          </Workspace>

          <StatusBar>
            <StatusText $grow>就緒</StatusText>
            <StatusText><Icon name="location" />15 , 15</StatusText>
            <StatusText><Icon name="size" />853 x 639</StatusText>
          </StatusBar>
        </AppWindow>
        <Wallpaper />
      </Desktop>
      <Taskbar>
        <StartOrb aria-label="Start" />
        <TaskButton aria-label="Browser"><TaskGlyph $c="#c81e1e" $w={22} /></TaskButton>
        <TaskButton aria-label="Explorer"><TaskGlyph $c="#c9c29a" $w={16} $square /></TaskButton>
        <TaskButton $flat aria-label="Console"><TaskGlyph $c="#10308a" $w={28} $square /></TaskButton>
        <TaskButton aria-label="Messenger"><TaskGlyph $c="#8fd3f0" $w={24} /></TaskButton>
        <TaskButton $w={55} aria-label="Document" />
        <TaskButton aria-label="Visual Studio"><TaskGlyph $c="#6a1d96" $w={28} /></TaskButton>
      </Taskbar>
    </Screen>
  );
}
